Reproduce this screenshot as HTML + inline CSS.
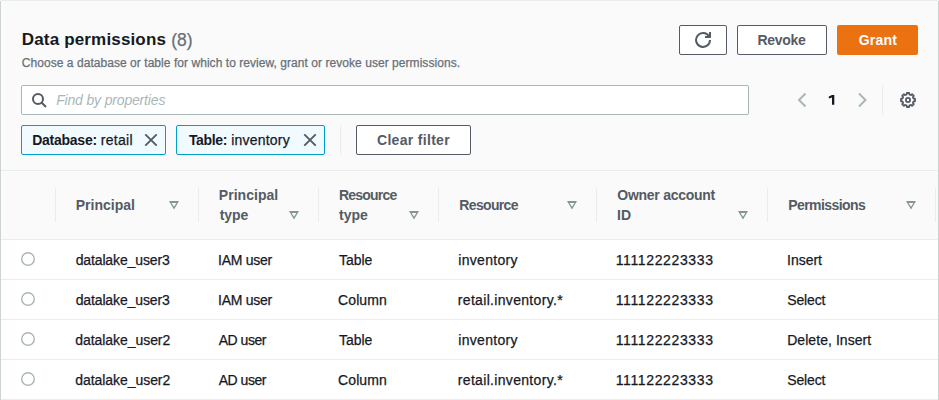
<!DOCTYPE html>
<html><head><meta charset="utf-8"><style>
html,body{margin:0;padding:0;width:939px;height:400px;overflow:hidden;background:#fff}
body{position:relative;font-family:"Liberation Sans", sans-serif}
body>div,body>svg{position:absolute}
.t{white-space:nowrap}
.r{-webkit-text-stroke:0.25px currentColor}
</style></head><body>
<div style="left:0px;top:0px;width:939px;height:400px;background:#fafafa"></div>
<div style="left:0px;top:240px;width:939px;height:160px;background:#fff"></div>
<div style="left:1px;top:0px;width:937px;height:1px;background:#eaeded"></div>
<div style="left:0px;top:1px;width:1px;height:399px;background:#cdd3d3"></div>
<div style="left:938px;top:1px;width:1px;height:399px;background:#cdd3d3"></div>
<div style="left:1px;top:170px;width:937px;height:1px;background:#eaeded"></div>
<div style="left:1px;top:239px;width:937px;height:1px;background:#eaeded"></div>
<div style="left:1px;top:279px;width:937px;height:1px;background:#eaeded"></div>
<div style="left:1px;top:319px;width:937px;height:1px;background:#eaeded"></div>
<div style="left:1px;top:359px;width:937px;height:1px;background:#eaeded"></div>
<div style="left:1px;top:399px;width:937px;height:1px;background:#eaeded"></div>
<div class="t" style="left:21.80px;top:30.31px;font-size:17px;line-height:20px;font-weight:700;color:#16191f;letter-spacing:0.160px;">Data permissions</div>
<div class="t r" style="left:171.32px;top:30.14px;font-size:17.5px;line-height:20px;font-weight:400;color:#687078;letter-spacing:-0.100px;">(8)</div>
<div class="t r" style="left:21.80px;top:55.84px;font-size:12px;line-height:14px;font-weight:400;color:#687078;letter-spacing:0.050px;">Choose a database or table for which to review, grant or revoke user permissions.</div>
<div style="left:679px;top:25px;width:48px;height:30px;background:#fff;border:1px solid #545b64;border-radius:2px;box-sizing:border-box"></div>
<svg style="left:695px;top:32px" width="16" height="16" viewBox="0 0 16 16"><g fill="none" stroke="#545b64" stroke-width="2"><path d="M10 5h5V0" stroke-linejoin="round"/><path d="M15 8a6.957 6.957 0 1 1-1.02-3.64"/></g></svg>
<div style="left:737px;top:25px;width:90px;height:30px;background:#fff;border:1px solid #545b64;border-radius:2px;box-sizing:border-box"></div>
<div class="t" style="left:757.48px;top:31.85px;font-size:14px;line-height:16px;font-weight:700;color:#545b64;letter-spacing:-0.320px;">Revoke</div>
<div style="left:837px;top:25px;width:81px;height:30px;background:#ec7211;border-radius:2px"></div>
<div class="t" style="left:858.68px;top:31.85px;font-size:14px;line-height:16px;font-weight:700;color:#fff;letter-spacing:0.250px;">Grant</div>
<div style="left:21px;top:85px;width:728px;height:30px;background:#fff;border:1px solid #aab7b8;border-radius:2px;box-sizing:border-box"></div>
<svg style="left:31px;top:92px" width="16" height="16" viewBox="0 0 16 16"><g fill="none" stroke="#545b64" stroke-width="2"><circle cx="7" cy="7" r="5"/><path d="M15 15l-4.5-4.5"/></g></svg>
<div class="t" style="left:56.16px;top:91.85px;font-size:14px;line-height:16px;font-weight:400;color:#aab7b8;letter-spacing:-0.165px;font-style:italic">Find by properties</div>
<svg style="left:794px;top:92px" width="16" height="16" viewBox="0 0 16 16"><path d="M11.5 1.5L5 8l6.5 6.5" fill="none" stroke="#aab7b8" stroke-width="2"/></svg>
<svg style="left:820px;top:90px" width="20" height="20" viewBox="0 0 20 20"><path d="M12 5H14.3V14.8H12V7.4L8.8 8.6V6.6Z" fill="#16191f"/></svg>
<svg style="left:854px;top:92px" width="16" height="16" viewBox="0 0 16 16"><path d="M5 1.5l6.5 6.5-6.5 6.5" fill="none" stroke="#aab7b8" stroke-width="2"/></svg>
<div style="left:882px;top:85px;width:1px;height:30px;background:#eaeded"></div>
<svg style="left:900px;top:92px" width="16" height="16" viewBox="0 0 16 16"><g fill="none" stroke="#545b64"><path d="M6.13 2.72 L6.67 2.25 L6.77 1.01 L9.23 1.01 L9.33 2.25 L9.87 2.72 L10.41 2.95 L11.13 3.00 L12.07 2.18 L13.82 3.93 L13.00 4.87 L13.05 5.59 L13.28 6.13 L13.75 6.67 L14.99 6.77 L14.99 9.23 L13.75 9.33 L13.28 9.87 L13.05 10.41 L13.00 11.13 L13.82 12.07 L12.07 13.82 L11.13 13.00 L10.41 13.05 L9.87 13.28 L9.33 13.75 L9.23 14.99 L6.77 14.99 L6.67 13.75 L6.13 13.28 L5.59 13.05 L4.87 13.00 L3.93 13.82 L2.18 12.07 L3.00 11.13 L2.95 10.41 L2.72 9.87 L2.25 9.33 L1.01 9.23 L1.01 6.77 L2.25 6.67 L2.72 6.13 L2.95 5.59 L3.00 4.87 L2.18 3.93 L3.93 2.18 L4.87 3.00 L5.59 2.95Z" stroke-width="1.8" stroke-linejoin="round"/><circle cx="8" cy="8" r="2.1" stroke-width="1.8"/></g></svg>
<div style="left:21px;top:125px;width:145px;height:30px;background:#f1faff;border:1px solid #00a1c9;border-radius:2px;box-sizing:border-box"></div>
<div class="t" style="left:32.16px;top:131.85px;font-size:14px;line-height:16px;font-weight:700;color:#16191f;letter-spacing:-0.250px;">Database:</div>
<div class="t r" style="left:100.80px;top:131.85px;font-size:14px;line-height:16px;font-weight:400;color:#16191f;letter-spacing:0.280px;">retail</div>
<svg style="left:143px;top:132px" width="16" height="16" viewBox="0 0 16 16"><path d="M2.3 2.3l11.4 11.4M13.7 2.3L2.3 13.7" fill="none" stroke="#545b64" stroke-width="1.9"/></svg>
<div style="left:176px;top:125px;width:149px;height:30px;background:#f1faff;border:1px solid #00a1c9;border-radius:2px;box-sizing:border-box"></div>
<div class="t" style="left:188.92px;top:131.85px;font-size:14px;line-height:16px;font-weight:700;color:#16191f;letter-spacing:-0.320px;">Table:</div>
<div class="t r" style="left:231.32px;top:131.85px;font-size:14px;line-height:16px;font-weight:400;color:#16191f;letter-spacing:0.200px;">inventory</div>
<svg style="left:302px;top:132px" width="16" height="16" viewBox="0 0 16 16"><path d="M2.3 2.3l11.4 11.4M13.7 2.3L2.3 13.7" fill="none" stroke="#545b64" stroke-width="1.9"/></svg>
<div style="left:340px;top:125px;width:1px;height:30px;background:#eaeded"></div>
<div style="left:356px;top:125px;width:115px;height:30px;background:#fff;border:1px solid #545b64;border-radius:2px;box-sizing:border-box"></div>
<div class="t" style="left:377.00px;top:131.85px;font-size:14px;line-height:16px;font-weight:700;color:#545b64;letter-spacing:0.309px;">Clear filter</div>
<div style="left:55px;top:188px;width:1px;height:34px;background:#eaeded"></div>
<div style="left:198px;top:188px;width:1px;height:34px;background:#eaeded"></div>
<div style="left:318px;top:188px;width:1px;height:34px;background:#eaeded"></div>
<div style="left:438px;top:188px;width:1px;height:34px;background:#eaeded"></div>
<div style="left:596px;top:188px;width:1px;height:34px;background:#eaeded"></div>
<div style="left:767px;top:188px;width:1px;height:34px;background:#eaeded"></div>
<div style="left:935px;top:188px;width:1px;height:34px;background:#eaeded"></div>
<div class="t" style="left:75.68px;top:196.95px;font-size:14px;line-height:16px;font-weight:700;color:#545b64;letter-spacing:0.025px;">Principal</div>
<svg style="left:169px;top:201px" width="10" height="9" viewBox="0 0 10 9"><path fill="#879596" fill-rule="evenodd" d="M0 0H10L5 8.6Z M2.6 1.9H7.4L5 5.8Z"/></svg>
<div class="t" style="left:218.84px;top:187.05px;font-size:14px;line-height:16px;font-weight:700;color:#545b64;letter-spacing:0.025px;">Principal</div>
<div class="t" style="left:219.64px;top:206.75px;font-size:14px;line-height:16px;font-weight:700;color:#545b64;letter-spacing:-0.067px;">type</div>
<svg style="left:289px;top:211px" width="10" height="9" viewBox="0 0 10 9"><path fill="#879596" fill-rule="evenodd" d="M0 0H10L5 8.6Z M2.6 1.9H7.4L5 5.8Z"/></svg>
<div class="t" style="left:339.00px;top:187.05px;font-size:14px;line-height:16px;font-weight:700;color:#545b64;letter-spacing:-0.800px;">Resource</div>
<div class="t" style="left:339.00px;top:206.75px;font-size:14px;line-height:16px;font-weight:700;color:#545b64;">type</div>
<svg style="left:409px;top:211px" width="10" height="9" viewBox="0 0 10 9"><path fill="#879596" fill-rule="evenodd" d="M0 0H10L5 8.6Z M2.6 1.9H7.4L5 5.8Z"/></svg>
<div class="t" style="left:459.32px;top:196.95px;font-size:14px;line-height:16px;font-weight:700;color:#545b64;letter-spacing:-0.657px;">Resource</div>
<svg style="left:567px;top:201px" width="10" height="9" viewBox="0 0 10 9"><path fill="#879596" fill-rule="evenodd" d="M0 0H10L5 8.6Z M2.6 1.9H7.4L5 5.8Z"/></svg>
<div class="t" style="left:617.32px;top:187.05px;font-size:14px;line-height:16px;font-weight:700;color:#545b64;letter-spacing:-0.267px;">Owner account</div>
<div class="t" style="left:617.00px;top:206.75px;font-size:14px;line-height:16px;font-weight:700;color:#545b64;">ID</div>
<svg style="left:738px;top:211px" width="10" height="9" viewBox="0 0 10 9"><path fill="#879596" fill-rule="evenodd" d="M0 0H10L5 8.6Z M2.6 1.9H7.4L5 5.8Z"/></svg>
<div class="t" style="left:788.16px;top:196.95px;font-size:14px;line-height:16px;font-weight:700;color:#545b64;letter-spacing:-0.560px;">Permissions</div>
<svg style="left:906px;top:201px" width="10" height="9" viewBox="0 0 10 9"><path fill="#879596" fill-rule="evenodd" d="M0 0H10L5 8.6Z M2.6 1.9H7.4L5 5.8Z"/></svg>
<svg style="left:21px;top:252px" width="14" height="14" viewBox="0 0 14 14"><circle cx="7" cy="7" r="6.3" fill="#fff" stroke="#aab7b8" stroke-width="1.4"/></svg>
<div class="t r" style="left:75.64px;top:252.45px;font-size:14px;line-height:16px;font-weight:400;color:#16191f;letter-spacing:-0.123px;">datalake_user3</div>
<div class="t r" style="left:218.00px;top:252.45px;font-size:14px;line-height:16px;font-weight:400;color:#16191f;letter-spacing:-0.257px;">IAM user</div>
<div class="t r" style="left:338.96px;top:252.45px;font-size:14px;line-height:16px;font-weight:400;color:#16191f;letter-spacing:-0.050px;">Table</div>
<div class="t r" style="left:458.32px;top:252.45px;font-size:14px;line-height:16px;font-weight:400;color:#16191f;letter-spacing:0.300px;">inventory</div>
<div class="t r" style="left:615.68px;top:252.45px;font-size:14px;line-height:16px;font-weight:400;color:#16191f;letter-spacing:0.636px;">111122223333</div>
<div class="t r" style="left:787.00px;top:252.45px;font-size:14px;line-height:16px;font-weight:400;color:#16191f;">Insert</div>
<svg style="left:21px;top:292px" width="14" height="14" viewBox="0 0 14 14"><circle cx="7" cy="7" r="6.3" fill="#fff" stroke="#aab7b8" stroke-width="1.4"/></svg>
<div class="t r" style="left:75.64px;top:292.45px;font-size:14px;line-height:16px;font-weight:400;color:#16191f;letter-spacing:-0.123px;">datalake_user3</div>
<div class="t r" style="left:218.00px;top:292.45px;font-size:14px;line-height:16px;font-weight:400;color:#16191f;letter-spacing:-0.257px;">IAM user</div>
<div class="t r" style="left:338.00px;top:292.45px;font-size:14px;line-height:16px;font-weight:400;color:#16191f;letter-spacing:0.120px;">Column</div>
<div class="t r" style="left:457.84px;top:292.45px;font-size:14px;line-height:16px;font-weight:400;color:#16191f;letter-spacing:0.318px;">retail.inventory.*</div>
<div class="t r" style="left:615.68px;top:292.45px;font-size:14px;line-height:16px;font-weight:400;color:#16191f;letter-spacing:0.636px;">111122223333</div>
<div class="t r" style="left:787.32px;top:292.45px;font-size:14px;line-height:16px;font-weight:400;color:#16191f;letter-spacing:-0.160px;">Select</div>
<svg style="left:21px;top:332px" width="14" height="14" viewBox="0 0 14 14"><circle cx="7" cy="7" r="6.3" fill="#fff" stroke="#aab7b8" stroke-width="1.4"/></svg>
<div class="t r" style="left:75.32px;top:332.45px;font-size:14px;line-height:16px;font-weight:400;color:#16191f;letter-spacing:-0.062px;">datalake_user2</div>
<div class="t r" style="left:218.64px;top:332.45px;font-size:14px;line-height:16px;font-weight:400;color:#16191f;letter-spacing:-0.467px;">AD user</div>
<div class="t r" style="left:338.96px;top:332.45px;font-size:14px;line-height:16px;font-weight:400;color:#16191f;letter-spacing:-0.050px;">Table</div>
<div class="t r" style="left:458.32px;top:332.45px;font-size:14px;line-height:16px;font-weight:400;color:#16191f;letter-spacing:0.300px;">inventory</div>
<div class="t r" style="left:615.68px;top:332.45px;font-size:14px;line-height:16px;font-weight:400;color:#16191f;letter-spacing:0.636px;">111122223333</div>
<div class="t r" style="left:787.16px;top:332.45px;font-size:14px;line-height:16px;font-weight:400;color:#16191f;letter-spacing:0.062px;">Delete, Insert</div>
<svg style="left:21px;top:372px" width="14" height="14" viewBox="0 0 14 14"><circle cx="7" cy="7" r="6.3" fill="#fff" stroke="#aab7b8" stroke-width="1.4"/></svg>
<div class="t r" style="left:75.32px;top:372.45px;font-size:14px;line-height:16px;font-weight:400;color:#16191f;letter-spacing:-0.062px;">datalake_user2</div>
<div class="t r" style="left:218.64px;top:372.45px;font-size:14px;line-height:16px;font-weight:400;color:#16191f;letter-spacing:-0.467px;">AD user</div>
<div class="t r" style="left:338.00px;top:372.45px;font-size:14px;line-height:16px;font-weight:400;color:#16191f;letter-spacing:0.120px;">Column</div>
<div class="t r" style="left:457.84px;top:372.45px;font-size:14px;line-height:16px;font-weight:400;color:#16191f;letter-spacing:0.318px;">retail.inventory.*</div>
<div class="t r" style="left:615.68px;top:372.45px;font-size:14px;line-height:16px;font-weight:400;color:#16191f;letter-spacing:0.636px;">111122223333</div>
<div class="t r" style="left:787.32px;top:372.45px;font-size:14px;line-height:16px;font-weight:400;color:#16191f;letter-spacing:-0.160px;">Select</div>
</body></html>
